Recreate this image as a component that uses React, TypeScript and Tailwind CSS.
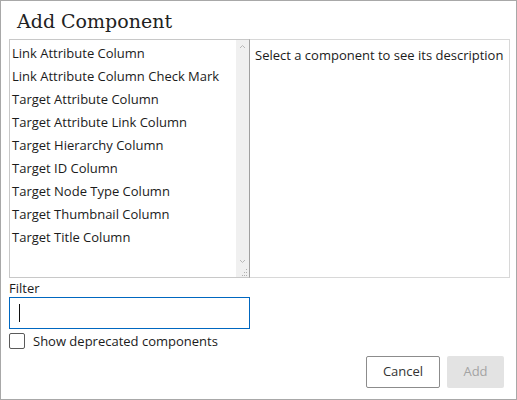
import React from "react"

const items = [
  "Link Attribute Column",
  "Link Attribute Column Check Mark",
  "Target Attribute Column",
  "Target Attribute Link Column",
  "Target Hierarchy Column",
  "Target ID Column",
  "Target Node Type Column",
  "Target Thumbnail Column",
  "Target Title Column",
]

const App: React.FC = () => {
  return (
    <div
      className="w-[517px] h-[400px] border border-[#a8a8a8] bg-white text-[#1b1b1b] flex flex-col"
      style={{ fontFamily: "'Open Sans', 'Noto Sans', sans-serif" }}
    >
      <h1
        className="text-[19px] leading-[26px] h-[38px] pl-[16px] pt-[7px] text-[#222]"
        style={{ fontFamily: "'DejaVu Serif', 'Liberation Serif', serif" }}
      >
        Add Component
      </h1>
      <div className="flex pl-[8px] h-[239px]">
        <div className="w-[241px] h-full border border-[#c8c8c8] border-r-[#a0a0a0] flex">
          <ul className="flex-1 pt-[2px] pl-[2px] text-[13px]">
            {items.map((item) => (
              <li key={item} className="h-[23px] leading-[23px] whitespace-nowrap">
                {item}
              </li>
            ))}
          </ul>
          <div className="w-[13px] bg-[#f0f0f0] flex flex-col justify-between items-center">
            <svg width="7" height="12" viewBox="0 0 7 12" className="mt-[2px]">
              <path d="M1 6 L3.5 3.5 L6 6" fill="none" stroke="#b8b8b8" strokeWidth="1" />
            </svg>
            <div className="flex flex-col items-center">
              <svg width="7" height="12" viewBox="0 0 7 12">
                <path d="M1 5 L3.5 7.5 L6 5" fill="none" stroke="#b8b8b8" strokeWidth="1" />
              </svg>
              <svg width="8" height="10" viewBox="0 0 8 10" className="ml-[2px]">
                <rect x="6" y="2" width="1" height="1" fill="#b0b0b0" />
                <rect x="4" y="5" width="1" height="1" fill="#b0b0b0" />
                <rect x="6" y="5" width="1" height="1" fill="#b0b0b0" />
                <rect x="2" y="8" width="1" height="1" fill="#b0b0b0" />
                <rect x="4" y="8" width="1" height="1" fill="#b0b0b0" />
                <rect x="6" y="8" width="1" height="1" fill="#b0b0b0" />
              </svg>
            </div>
          </div>
        </div>
        <div className="w-[260px] h-full border border-l-0 border-[#d8d8d8] pl-[5px] pt-[4px] text-[13px] leading-[22px] whitespace-nowrap">
          Select a component to see its description
        </div>
      </div>
      <div className="pl-[8px] pt-[1px]">
        <label className="block text-[13px] leading-[18px]">Filter</label>
        <div className="w-[241px] h-[32px] border border-[#0067c0] flex items-center pl-[9px]">
          <span className="w-[1px] h-[18px] bg-[#111]" />
        </div>
        <label className="flex items-center gap-[8px] mt-[3px] text-[13px] leading-[18px]">
          <span className="w-[16px] h-[16px] border-[1.5px] border-[#5a5a5a] rounded-[2px]" />
          Show deprecated components
        </label>
      </div>
      <div className="flex justify-end gap-[7px] pr-[12px] mt-[6px]">
        <button className="w-[74px] h-[32px] border border-[#8c8c8c] rounded-[2px] text-[13px] bg-white text-[#333]">
          Cancel
        </button>
        <button className="w-[57px] h-[32px] rounded-[2px] text-[13px] bg-[#e3e3e3] text-[#a3a3a3]">
          Add
        </button>
      </div>
    </div>
  )
}

export default App
